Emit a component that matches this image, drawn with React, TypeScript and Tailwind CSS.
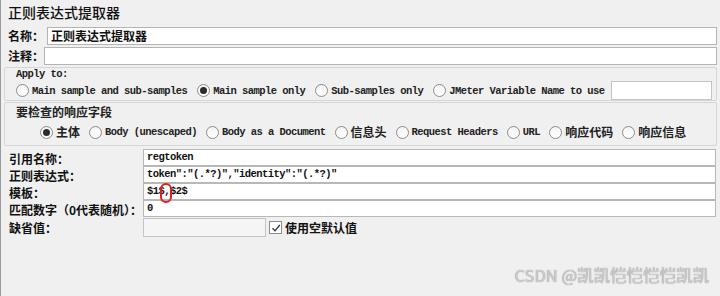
import React from "react";

const cjk = "font-['Noto_Sans_CJK_SC',sans-serif]";
const mono = "font-['Liberation_Mono','Noto_Sans_CJK_SC',monospace] text-[10.5px] tracking-[-0.55px] font-bold";

function Radio({ checked = false }: { checked?: boolean }) {
  return (
    <span className="w-[13px] h-[13px] rounded-full border border-[#8c8c8c] bg-gradient-to-b from-[#f4f4f4] to-white flex items-center justify-center shrink-0">
      {checked && <span className="w-[7px] h-[7px] rounded-full bg-[#2b2b2b]" />}
    </span>
  );
}

function Option({
  label,
  checked,
  cn,
}: {
  label: string;
  checked?: boolean;
  cn?: boolean;
}) {
  return (
    <div className="flex items-center gap-[3px]">
      <Radio checked={checked} />
      <span
        className={
          cn
            ? `${cjk} text-[12px] font-bold text-[#222] leading-[16px]`
            : `${mono} text-[#222] leading-[16px]`
        }
      >
        {label}
      </span>
    </div>
  );
}

function Field({ value, cn }: { value?: string; cn?: boolean }) {
  return (
    <div className="h-[18px] bg-white border border-[#b4b4b4] flex items-center px-[3px]">
      <span
        className={
          cn
            ? `${cjk} text-[12px] font-bold text-[#111] leading-none`
            : `${mono} text-[#111] leading-none`
        }
      >
        {value}
      </span>
    </div>
  );
}

export default function App() {
  return (
    <div className="relative w-[720px] h-[296px] overflow-hidden bg-[#f0f0f0] border-l border-[#9a9a9a] pl-[3px] pr-[3px]">
      {/* TITLE */}
      <div className={`${cjk} h-[27px] pl-[4px] pt-[2px] text-[14px] leading-[20px] text-[#111] font-medium`}>
        正则表达式提取器
      </div>

      {/* NAME / COMMENT */}
      <div className="flex flex-col gap-[2px] pl-[4px]">
        <div className="flex items-center">
          <span className={`${cjk} w-[39px] text-[12px] font-bold text-[#111]`}>名称：</span>
          <div className="flex-1">
            <Field value="正则表达式提取器" cn />
          </div>
        </div>
        <div className="flex items-center">
          <span className={`${cjk} w-[36px] text-[12px] font-bold text-[#111]`}>注释：</span>
          <div className="flex-1">
            <Field />
          </div>
        </div>
      </div>

      {/* APPLY TO */}
      <div className="mt-[2px] h-[34px] border border-[#d6d6d6] rounded-[2px] pl-[11px] pr-[4px] flex flex-col">
        <div className={`${mono} text-[#222] leading-[12px] mt-[0px]`}>Apply to:</div>
        <div className="flex items-center gap-[10px] mt-[1px]">
          <Option label="Main sample and sub-samples" />
          <Option label="Main sample only" checked />
          <Option label="Sub-samples only" />
          <Option label="JMeter Variable Name to use" />
          <div className="flex-1 h-[19px] bg-white border border-[#c4c4c4] ml-[-4px]" />
        </div>
      </div>

      {/* RESPONSE FIELD */}
      <div className="mt-[1px] h-[44px] border border-[#d6d6d6] rounded-[2px] pl-[11px] flex flex-col">
        <div className={`${cjk} text-[12px] font-bold text-[#222] leading-[16px] mt-[1px]`}>要检查的响应字段</div>
        <div className="flex items-center gap-[9px] pl-[24px] mt-[4px]">
          <Option label="主体" checked cn />
          <Option label="Body (unescaped)" />
          <Option label="Body as a Document" />
          <Option label="信息头" cn />
          <Option label="Request Headers" />
          <Option label="URL" />
          <Option label="响应代码" cn />
          <Option label="响应信息" cn />
        </div>
      </div>

      {/* FIELDS */}
      <div className="mt-[4px] grid grid-cols-[134px_1fr] pl-[5px] pr-[1px]">
        {[
          ["引用名称：", "regtoken"],
          ["正则表达式：", 'token":"(.*?)","identity":"(.*?)"'],
          ["模板：", "$1$,$2$"],
          ["匹配数字（0代表随机）：", "0"],
        ].map(([label, value]) => (
          <React.Fragment key={label}>
            <span className={`${cjk} text-[12px] font-bold text-[#111] leading-[17px]`}>{label}</span>
            <div className="h-[17px] bg-white border border-[#b8b8b8] -mt-px first:mt-0 flex items-center px-[3px]">
              <span className={`${mono} text-[#111] leading-none`}>{value}</span>
            </div>
          </React.Fragment>
        ))}
        <span className={`${cjk} text-[12px] font-bold text-[#111] leading-[19px]`}>缺省值：</span>
        <div className="flex items-center gap-[3px]">
          <div className="w-[123px] h-[19px] bg-[#f5f5f5] border border-[#c4c4c4]" />
          <span className="w-[13px] h-[13px] border border-[#8c8c8c] bg-white flex items-center justify-center">
            <svg width="10" height="10" viewBox="0 0 10 10">
              <path d="M1.5 5.2 L4 7.8 L8.8 2" fill="none" stroke="#333" strokeWidth="1.3" />
            </svg>
          </span>
          <span className={`${cjk} text-[12px] font-bold text-[#111]`}>使用空默认值</span>
        </div>
      </div>

      {/* RED MARK */}
      <div className="absolute left-[159px] top-[183px] w-[12px] h-[20px] rounded-full border-2 border-[#e0201c]" />

      {/* WATERMARK */}
      <div className={`${cjk} absolute right-[11px] top-[263px] text-[16.5px] text-[#cfcfcf] [text-shadow:0_0_1px_#7a7a7a]`}>
        CSDN @凯凯恺恺恺恺凯凯
      </div>
    </div>
  );
}
